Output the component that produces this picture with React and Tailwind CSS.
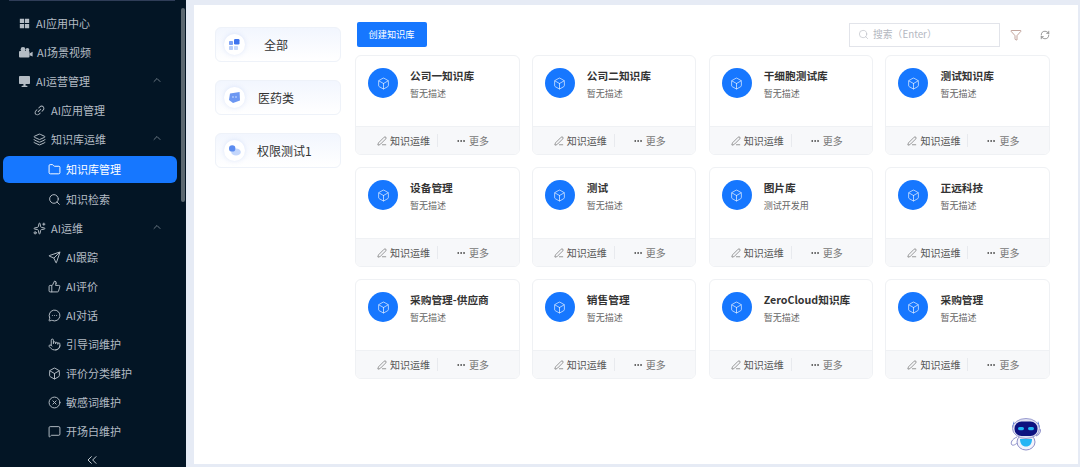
import { AiFillAppstore, AiOutlineLink } from 'react-icons/ai'
import {
  Box, ChevronUp, ChevronsLeft, CircleX, Ellipsis, Folder, Funnel, Layers, MessageCircleMore,
  MessageSquare, PenLine, Pointer, RefreshCw, Search, Send, Sparkles, ThumbsUp,
} from 'lucide-react'

function MovieCamera({ size }) {
  return (
    <svg width={size + 2} height={size} viewBox="0 0 15 13" fill="currentColor">
      <circle cx="5" cy="3.4" r="2.4" />
      <circle cx="9.4" cy="3.8" r="1.9" />
      <rect x="1" y="5" width="10.5" height="6.5" rx="1" />
      <path d="M11.5 7.4 L14.6 5.8 V10.6 L11.5 9.2 Z" />
    </svg>
  )
}

function Monitor({ size }) {
  return (
    <svg width={size} height={size} viewBox="0 0 13 13" fill="currentColor">
      <rect x="1" y="1" width="11" height="8" rx="0.8" />
      <rect x="5.4" y="9" width="2.2" height="2" />
      <rect x="3.5" y="10.8" width="6" height="1.2" rx="0.4" />
    </svg>
  )
}

const NAV = [
  { label: 'AI应用中心', icon: AiFillAppstore, level: 0 },
  { label: 'AI场景视频', icon: MovieCamera, level: 0, tight: true },
  { label: 'AI运营管理', icon: Monitor, level: 0, open: true },
  { label: 'AI应用管理', icon: AiOutlineLink, level: 1 },
  { label: '知识库运维', icon: Layers, level: 1, open: true },
  { label: '知识库管理', icon: Folder, level: 2, active: true },
  { label: '知识检索', icon: Search, level: 2 },
  { label: 'AI运维', icon: Sparkles, level: 1, open: true },
  { label: 'AI跟踪', icon: Send, level: 2 },
  { label: 'AI评价', icon: ThumbsUp, level: 2 },
  { label: 'AI对话', icon: MessageCircleMore, level: 2 },
  { label: '引导词维护', icon: Pointer, level: 2 },
  { label: '评价分类维护', icon: Box, level: 2 },
  { label: '敏感词维护', icon: CircleX, level: 2 },
  { label: '开场白维护', icon: MessageSquare, level: 2 },
]

const CARDS = [
  { name: '公司一知识库', desc: '暂无描述' },
  { name: '公司二知识库', desc: '暂无描述' },
  { name: '干细胞测试库', desc: '暂无描述' },
  { name: '测试知识库', desc: '暂无描述' },
  { name: '设备管理', desc: '暂无描述' },
  { name: '测试', desc: '暂无描述' },
  { name: '图片库', desc: '测试开发用' },
  { name: '正远科技', desc: '暂无描述' },
  { name: '采购管理-供应商', desc: '暂无描述' },
  { name: '销售管理', desc: '暂无描述' },
  { name: 'ZeroCloud知识库', desc: '暂无描述' },
  { name: '采购管理', desc: '暂无描述' },
]

const PAD = ['pl-[18px]', 'pl-[33px]', 'pl-[48px]']

function NavRow({ item }) {
  const Icon = item.icon
  return (
    <div className={`relative flex items-center shrink-0 ${item.tight ? 'gap-[4px]' : 'gap-[5px]'} ${item.active ? 'h-[27px] my-[1.5px] ml-[3px] w-[174px] pl-[45px] rounded-md bg-[#1677ff] text-white' : `h-[29.1px] text-[#b4bcc4] ${PAD[item.level]}`}`}>
      <Icon size={13} strokeWidth={1.8} className="shrink-0" />
      <span className="text-[11px] leading-none">{item.label}</span>
      {item.open && <ChevronUp size={12} strokeWidth={1.5} className="absolute left-[151px] top-[7px] text-[#8b96a0]" />}
    </div>
  )
}

function Sidebar() {
  return (
    <aside className="relative w-[186px] shrink-0 h-full bg-[#031525] overflow-hidden pt-[9px]">
      <div className="absolute left-[9px] top-0 w-[166px] h-px bg-[#2f3d58]" />
      <div className="absolute left-[181px] top-[8px] w-[4px] h-[194px] rounded-sm bg-[#5b6770]" />
      {NAV.map((item) => <NavRow key={item.label} item={item} />)}
      <div className="flex justify-center w-[184px] pt-[6px] text-[#c4ccd3]">
        <ChevronsLeft size={16} strokeWidth={1.5} />
      </div>
    </aside>
  )
}

function CategoryIcon({ kind }) {
  return (
    <div className="w-[21px] h-[21px] rounded-full bg-white shadow-[0_0_5px_rgba(90,130,220,0.18)] flex items-center justify-center shrink-0">
      <svg width="13" height="13" viewBox="0 0 13 13">
        {kind === 'all' && (
          <g>
            <rect x="1" y="3" width="4" height="4" rx="0.8" fill="#7da2f5" />
            <rect x="6" y="1" width="5.5" height="5.5" rx="1.2" fill="#3f74ee" />
            <rect x="1" y="8" width="4" height="4" rx="0.8" fill="#b6ccfa" />
            <rect x="6" y="8" width="4" height="4" rx="0.8" fill="#c7d8fb" />
          </g>
        )}
        {kind === 'med' && (
          <g>
            <path d="M2 2.4 L11.6 1 L12 9.4 L5 12 L1 9 Z" fill="#6c97f2" />
            <circle cx="5" cy="6" r="1" fill="#a9c4fa" />
            <circle cx="8" cy="6" r="1" fill="#a9c4fa" />
          </g>
        )}
        {kind === 'auth' && (
          <g>
            <ellipse cx="8" cy="8" rx="4.8" ry="3.6" fill="#c3d6fb" />
            <circle cx="4.2" cy="4.4" r="3.2" fill="#5c8cf0" />
          </g>
        )}
      </svg>
    </div>
  )
}

function Category({ kind, label, labelClass }) {
  return (
    <div className="h-[35px] rounded-md border border-[#eef2f9] bg-gradient-to-b from-[#f2f6fe] to-white flex items-center pl-[8px]">
      <CategoryIcon kind={kind} />
      <span className={`text-[12px] leading-none pt-[1px] text-[#333333] ${labelClass}`}>{label}</span>
    </div>
  )
}

function KnowledgeCard({ name, desc }) {
  return (
    <div className="h-[100px] rounded-md border border-[#eff1f4] bg-white flex flex-col overflow-hidden">
      <div className="flex-1 flex pl-[12px] pt-[12px]">
        <div className="w-[30px] h-[30px] rounded-full bg-[#1677ff] flex items-center justify-center shrink-0">
          <Box size={13} strokeWidth={1.2} className="text-white" />
        </div>
        <div className="ml-[12px]">
          <div className="text-[10.7px] leading-[16px] font-bold text-[#333333] whitespace-nowrap">{name}</div>
          <div className="text-[9px] leading-[12px] mt-[4px] text-[#666666]">{desc}</div>
        </div>
      </div>
      <div className="h-[28px] shrink-0 border-t border-[#eff1f4] bg-[#f7f8fa] flex items-center text-[#555555]">
        <div className="w-[82px] flex items-center justify-end gap-[3px] pr-[7px] border-r border-[#e8eaee] h-[13px]">
          <PenLine size={10} strokeWidth={1.4} />
          <span className="text-[10px] leading-none">知识运维</span>
        </div>
        <div className="flex items-center gap-[3px] pl-[18px]">
          <Ellipsis size={10} strokeWidth={2.2} className="text-[#444444]" />
          <span className="text-[10px] leading-none text-[#777777]">更多</span>
        </div>
      </div>
    </div>
  )
}

function Robot() {
  return (
    <svg width="34" height="33" viewBox="0 0 34 33" className="absolute left-[815px] top-[413px]">
      <path d="M3 9 L5 3 L6.5 13 Z" fill="#3f6fd8" />
      <path d="M31 9 L29 3 L27.5 13 Z" fill="#3f6fd8" />
      <path d="M27 18 C31 16 32 13 31 11" fill="none" stroke="#8d8fc9" strokeWidth="1.2" />
      <path d="M8 19 C3 21 1 25 3 27 C5 28 8 25 10 24" fill="none" stroke="#8d8fc9" strokeWidth="1" />
      <ellipse cx="17" cy="24" rx="9" ry="8" fill="#f2f3fb" stroke="#8d8fc9" strokeWidth="1" />
      <path d="M11 21 H23 C23 26 20.5 28.5 17 28.5 C13.5 28.5 11 26 11 21 Z" fill="#25b5f4" />
      <ellipse cx="17" cy="10.5" rx="13.5" ry="10" fill="#dfe1f3" stroke="#9a9ccf" strokeWidth="1" />
      <rect x="5.5" y="3.5" width="23" height="14.5" rx="7" fill="#0e1280" />
      <rect x="9" y="9" width="6" height="3.2" rx="1.6" fill="#1fb6f5" />
      <rect x="19" y="9" width="6" height="3.2" rx="1.6" fill="#1fb6f5" />
    </svg>
  )
}

export default function App() {
  return (
    <div className="flex w-[1080px] h-[467px] overflow-hidden bg-[#e6ebf5]" style={{ fontFamily: '"Noto Sans CJK SC", "Noto Sans", sans-serif' }}>
      <Sidebar />
      <main className="flex-1 pl-[8px] pr-[2px] pt-[5px] pb-[3px]">
        <div className="relative h-full bg-white flex pl-[21px] pt-[22px]">
          <div className="w-[126px] shrink-0 flex flex-col gap-[18px]">
            <Category kind="all" label="全部" labelClass="ml-[19px]" />
            <Category kind="med" label="医药类" labelClass="ml-[13px]" />
            <Category kind="auth" label="权限测试1" labelClass="ml-[12px]" />
          </div>
          <div className="w-[695px] ml-[14px] -mt-[5px]">
            <div className="h-[25px] mb-[8px] flex items-center pl-[1.5px]">
              <button className="w-[70px] h-[25px] bg-[#1677ff] text-white text-[9.2px] rounded-[2px]">创建知识库</button>
              <div className="ml-auto w-[151px] h-[24px] border border-[#e2e4ea] flex items-center pl-[8px] gap-[4px] text-[#b3b7bf]">
                <Search size={11} strokeWidth={1.3} />
                <span className="text-[9.8px] leading-none pt-[1px] whitespace-nowrap">搜索（Enter）</span>
              </div>
              <Funnel size={12} strokeWidth={1.2} className="ml-[10px] text-[#9a6a5c]" />
              <RefreshCw size={10} strokeWidth={1.4} className="ml-[18px] text-[#555555]" />
            </div>
            <div className="grid grid-cols-4 gap-x-[12.3px] gap-y-[12px]">
              {CARDS.map((card) => <KnowledgeCard key={card.name} {...card} />)}
            </div>
          </div>
          <Robot />
        </div>
      </main>
    </div>
  )
}
